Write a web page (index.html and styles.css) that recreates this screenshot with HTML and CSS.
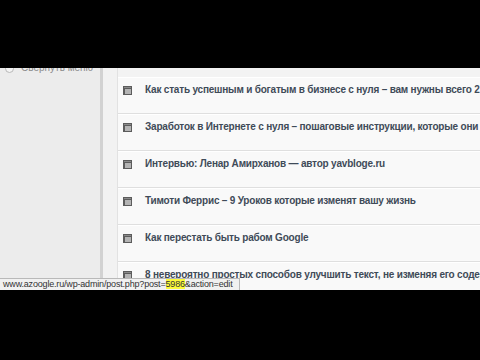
FILE: index.html
```html
<!DOCTYPE html>
<html>
<head>
<meta charset="utf-8">
<link rel="stylesheet" href="styles.css">
</head>
<body>
<div class="frame">
  <div class="bar-top"></div>
  <div class="screen">
    <aside class="sidebar">
      <div class="collapse"><span class="circle"></span><span>Свернуть меню</span></div>
    </aside>
    <div class="gutter"></div>
    <div class="list">
      <div class="row"><svg class="ico" viewBox="0 0 9 9"><rect width="9" height="9" fill="#5c5c5c"/><rect x="2" y="3" width="6" height="5" fill="#b4b4b4"/><rect x="1" y="1" width="7" height="1" fill="#8a8a8a"/></svg><span class="title">Как стать успешным и богатым в бизнесе с нуля – вам нужны всего 2 года</span></div>
      <div class="row"><svg class="ico" viewBox="0 0 9 9"><rect width="9" height="9" fill="#5c5c5c"/><rect x="2" y="3" width="6" height="5" fill="#b4b4b4"/><rect x="1" y="1" width="7" height="1" fill="#8a8a8a"/></svg><span class="title">Заработок в Интернете с нуля – пошаговые инструкции, которые они не расскажут</span></div>
      <div class="row"><svg class="ico" viewBox="0 0 9 9"><rect width="9" height="9" fill="#5c5c5c"/><rect x="2" y="3" width="6" height="5" fill="#b4b4b4"/><rect x="1" y="1" width="7" height="1" fill="#8a8a8a"/></svg><span class="title">Интервью: Ленар Амирханов — автор yavbloge.ru</span></div>
      <div class="row"><svg class="ico" viewBox="0 0 9 9"><rect width="9" height="9" fill="#5c5c5c"/><rect x="2" y="3" width="6" height="5" fill="#b4b4b4"/><rect x="1" y="1" width="7" height="1" fill="#8a8a8a"/></svg><span class="title">Тимоти Феррис – 9 Уроков которые изменят вашу жизнь</span></div>
      <div class="row"><svg class="ico" viewBox="0 0 9 9"><rect width="9" height="9" fill="#5c5c5c"/><rect x="2" y="3" width="6" height="5" fill="#b4b4b4"/><rect x="1" y="1" width="7" height="1" fill="#8a8a8a"/></svg><span class="title">Как перестать быть рабом Google</span></div>
      <div class="row"><svg class="ico" viewBox="0 0 9 9"><rect width="9" height="9" fill="#5c5c5c"/><rect x="2" y="3" width="6" height="5" fill="#b4b4b4"/><rect x="1" y="1" width="7" height="1" fill="#8a8a8a"/></svg><span class="title">8 невероятно простых способов улучшить текст, не изменяя его содержания</span></div>
    </div>
    <div class="status">www.azoogle.ru/wp-admin/post.php?post=<mark>5986</mark>&amp;action=edit</div>
  </div>
</div>
</body>
</html>
```
FILE: styles.css
```css
html, body {
  margin: 0;
  padding: 0;
  background: #000;
}
.frame {
  width: 480px;
  height: 360px;
  overflow: hidden;
  background: #000;
}
.bar-top {
  height: 68px;
}
.screen {
  position: relative;
  height: 222px;
  display: flex;
  overflow: hidden;
  font-family: "Liberation Sans", Arial, sans-serif;
}
.sidebar {
  width: 100px;
  flex: none;
  background: #ececec;
  border-right: 3px solid #d2d2d2;
}
.collapse {
  display: flex;
  align-items: center;
  gap: 7px;
  margin-top: -6px;
  padding-left: 5px;
  font-size: 10px;
  line-height: 12px;
  color: #8a8a8a;
}
.circle {
  width: 7px;
  height: 7px;
  border-radius: 50%;
  border: 1px solid #b8b8b8;
  background: #f4f4f4;
}
.gutter {
  width: 14px;
  flex: none;
  background: #f2f2f2;
  border-right: 1px solid #e2e2e2;
}
.list {
  flex: 1;
  min-width: 0;
  padding-top: 9px;
  background: #f3f3f3;
}
.row {
  height: 37px;
  display: flex;
  align-items: flex-start;
  padding: 5px 0 0 5px;
  box-sizing: border-box;
  background: #f9f9f9;
  border-top: 1px solid #fff;
  border-bottom: 1px solid #dfdfdf;
  white-space: nowrap;
}
.ico {
  width: 9px;
  height: 9px;
  flex: none;
  margin-top: 3px;
  margin-right: 13px;
}
.title {
  font-size: 10px;
  font-weight: bold;
  letter-spacing: -0.2px;
  color: #3f4b58;
  line-height: 14px;
}
.status {
  position: absolute;
  left: 0;
  bottom: 0;
  width: 240px;
  height: 12px;
  padding-left: 3px;
  box-sizing: border-box;
  background: #f1f1f1;
  border-top: 1px solid #b9b9b9;
  border-right: 1px solid #b9b9b9;
  font-size: 9px;
  letter-spacing: -0.18px;
  line-height: 11px;
  color: #333;
  white-space: nowrap;
  overflow: hidden;
}
.status mark {
  background: #fbfb3a;
  color: #333;
}
```
